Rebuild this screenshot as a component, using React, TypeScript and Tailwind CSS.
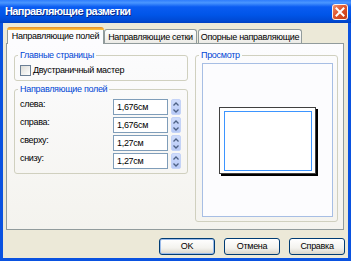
import React from "react";

function Spinner() {
  return (
    <div className="w-[10px] h-[16px] flex flex-col gap-[0px] rounded-[2px] bg-[linear-gradient(to_bottom,#cfdcfc,#b7c9f6)] border border-[#c4d3f7]">
      <div className="flex-1 flex items-center justify-center">
        <svg width="6" height="4" viewBox="0 0 6 4">
          <path d="M0.5 3.5 L3 1 L5.5 3.5" fill="none" stroke="#4d6185" strokeWidth="1.3" />
        </svg>
      </div>
      <div className="flex-1 flex items-center justify-center">
        <svg width="6" height="4" viewBox="0 0 6 4">
          <path d="M0.5 0.5 L3 3 L5.5 0.5" fill="none" stroke="#4d6185" strokeWidth="1.3" />
        </svg>
      </div>
    </div>
  );
}

function Row({ label, value }: { label: string; value: string }) {
  return (
    <div className="flex items-start h-[16px]">
      <div className="w-[93px] leading-[10px]">{label}</div>
      <div className="w-[55px] h-[16px] border border-[#7f9db9] bg-white flex items-center pl-[3px] leading-[14px]">
        {value}
      </div>
      <div className="ml-[3px]">
        <Spinner />
      </div>
    </div>
  );
}

function Button({ children, def }: { children: React.ReactNode; def?: boolean }) {
  return (
    <div
      className={
        "w-[56px] h-[17px] rounded-[3px] border border-[#003c74] flex items-center justify-center bg-[linear-gradient(to_bottom,#ffffff,#f3f2ee_60%,#d9d5c9)] " +
        (def ? "shadow-[inset_0_0_0_1px_#9bbbea]" : "")
      }
    >
      {children}
    </div>
  );
}

function CloseIcon() {
  return (
    <svg width="16" height="16" viewBox="0 0 16 16">
      <defs>
        <linearGradient id="xpclose" x1="0" y1="0" x2="1" y2="1">
          <stop offset="0" stopColor="#f39a78" />
          <stop offset="0.45" stopColor="#e0542c" />
          <stop offset="1" stopColor="#c23a10" />
        </linearGradient>
      </defs>
      <rect x="0.5" y="0.5" width="15" height="15" rx="2.5" fill="url(#xpclose)" stroke="#f4f4f4" strokeWidth="1" />
      <path d="M4.5 4.5 L11.5 11.5 M11.5 4.5 L4.5 11.5" stroke="#ffffff" strokeWidth="2" strokeLinecap="square" />
    </svg>
  );
}

export default function App() {
  return (
    <div className="w-[351px] h-[261px] flex flex-col bg-[#0a52e0] overflow-hidden font-['Liberation_Sans',Arial,sans-serif] text-[9px] tracking-[-0.3px] text-black">
      {/* Title bar */}
      <div className="h-[23px] flex items-start bg-[linear-gradient(to_bottom,#2f7dfc_0%,#4a96ff_12%,#0a5cf2_30%,#0055e8_65%,#0049d4_90%,#0040c0_100%)]">
        <div className="flex-1 pl-[5px] pt-[5px] text-white font-bold text-[11px] tracking-[-0.6px] leading-[13px] [text-shadow:1px_1px_0_#0a2a8a]">
          Направляющие разметки
        </div>
        <div className="mt-[4px] mr-[3px] w-[16px] h-[16px] rounded-[3px] bg-[#df5129]">
          <CloseIcon />
        </div>
      </div>

      {/* Body */}
      <div className="flex-1 mx-[3px] mb-[3px] bg-[#ece9d8] flex flex-col pt-[4px]">
        {/* Tabs */}
        <div className="h-[16px] flex items-end ml-[4px]">
          <div className="relative z-10 w-[97px] h-[17px] mb-[-1px] flex flex-col">
            <div className="h-[3px] rounded-t-[3px] bg-[linear-gradient(to_bottom,#e68b2c,#ffc83c)]" />
            <div className="flex-1 bg-[#fcfcfe] border-x border-[#919b9c] flex items-start justify-center pt-[1px] leading-[10px]">
              Направляющие полей
            </div>
          </div>
          <div className="w-[93px] h-[14px] rounded-t-[3px] border-x border-t border-[#919b9c] bg-[linear-gradient(to_bottom,#ffffff,#ecebe6)] flex items-center justify-center leading-[10px]">
            Направляющие сетки
          </div>
          <div className="ml-[1px] w-[104px] h-[14px] rounded-t-[3px] border-x border-t border-[#919b9c] bg-[linear-gradient(to_bottom,#ffffff,#ecebe6)] flex items-center justify-center leading-[10px]">
            Опорные направляющие
          </div>
        </div>

        {/* Panel */}
        <div className="ml-[3px] w-[338px] h-[187px] border border-[#919b9c] bg-[linear-gradient(to_bottom,#fcfcfe,#f4f3ee)] flex gap-[7px] pl-[7px] pr-[5px] pt-[5px] pb-[7px]">
          {/* Left column */}
          <div className="w-[174px] flex flex-col gap-[2px]">
            <fieldset className="border border-[#d0d0bf] rounded-[3px] p-0 m-0">
              <legend className="ml-[3px] px-[2px] text-[#0046d5] leading-[12px]">Главные страницы</legend>
              <div className="flex items-center pl-[5px] pt-[4px] pb-[4px] gap-[2px]">
                <div className="w-[11px] h-[11px] border border-[#6b7f95] bg-[linear-gradient(135deg,#dcdcd7,#ffffff)]" />
                <span className="leading-[11px]">Двустраничный мастер</span>
              </div>
            </fieldset>
            <fieldset className="border border-[#d0d0bf] rounded-[3px] p-0 m-0">
              <legend className="ml-[3px] px-[2px] text-[#0046d5] leading-[12px]">Направляющие полей</legend>
              <div className="flex flex-col gap-[2px] pl-[5px] pt-[4px] pb-[4px]">
                <Row label="слева:" value="1,676см" />
                <Row label="справа:" value="1,676см" />
                <Row label="сверху:" value="1,27см" />
                <Row label="снизу:" value="1,27см" />
              </div>
            </fieldset>
          </div>

          {/* Right group */}
          <fieldset className="w-[143px] h-[173px] border border-[#d0d0bf] rounded-[3px] p-0 m-0">
            <legend className="ml-[3px] px-[2px] text-[#0046d5] leading-[12px]">Просмотр</legend>
            <div className="h-[160px] pt-[2px] pl-[6px] pr-[4px] pb-[4px] flex">
              <div className="flex-1 border border-[#a7bee4] bg-[#fcfcfe] flex items-center justify-center">
                <div className="w-[97px] h-[67px] bg-white border border-[#404040] shadow-[2px_2px_0_#000] pl-[4px] pr-[3px] pt-[3px] pb-[2px] flex">
                  <div className="flex-1 border border-[#3d95ff]" />
                </div>
              </div>
            </div>
          </fieldset>
        </div>

        {/* Buttons */}
        <div className="mt-[8px] flex justify-end gap-[9px] pr-[3px]">
          <Button def>OK</Button>
          <Button>Отмена</Button>
          <Button>Справка</Button>
        </div>
      </div>
    </div>
  );
}
